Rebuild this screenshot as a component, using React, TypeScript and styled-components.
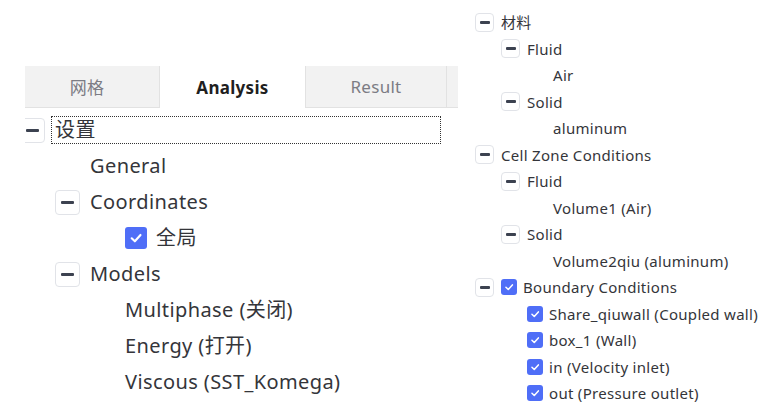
import React from "react";
import styled, { createGlobalStyle, css } from "styled-components";

const GlobalStyle = createGlobalStyle`
	html, body {
		margin: 0;
		padding: 0;
		background: #ffffff;
	}
	body {
		font-family: "Noto Sans", "Noto Sans CJK SC", sans-serif;
		color: #34353a;
	}
`;

type Size = "lg" | "sm";

interface TreeNode {
	label: string;
	children?: TreeNode[];
	checked?: boolean;
	focused?: boolean;
}

const metrics = {
	lg: { row: 36, indent: 35, box: 25, gap: 10, check: 22, checkGap: 9, font: 20, track: 0.4 },
	sm: { row: 26.5, indent: 26, box: 19, gap: 7, check: 16, checkGap: 6, font: 15, track: 0.3 },
};

const Page = styled.div`
	display: flex;
	align-items: flex-start;
	width: 765px;
	height: 412px;
	overflow: hidden;
`;

const LeftPane = styled.div`
	margin: 66px 0 0 25px;
	width: 433px;
	overflow: hidden;
`;

const TabBar = styled.div`
	display: flex;
	height: 42px;
	margin-left: -10px;
	margin-bottom: 4px;
`;

const Tab = styled.div<{ $active?: boolean; $w: number; $edge?: boolean }>`
	flex: 0 0 ${(p) => p.$w}px;
	display: flex;
	align-items: center;
	justify-content: center;
	box-sizing: border-box;
	font-size: 17px;
	letter-spacing: 0.3px;
	${(p) =>
		p.$active
			? css`
					background: #ffffff;
					color: #1f1f1f;
					font-weight: 700;
			  `
			: css`
					background: #f2f2f2;
					color: #7c7c84;
					border-right: 1px solid #e2e2e2;
					border-bottom: 1px solid #e2e2e2;
			  `}
	${(p) => p.$edge && "border-left: 1px solid #e2e2e2;"}
`;

const RightPane = styled.div`
	margin-left: 17px;
	padding-top: 9px;
`;

const Row = styled.div<{ $size: Size; $level: number }>`
	display: flex;
	align-items: center;
	height: ${(p) => metrics[p.$size].row}px;
	padding-left: ${(p) => metrics[p.$size].indent * p.$level}px;
	font-size: ${(p) => metrics[p.$size].font}px;
	letter-spacing: ${(p) => metrics[p.$size].track}px;
	white-space: nowrap;
`;

const Slot = styled.div<{ $size: Size }>`
	flex: 0 0 ${(p) => metrics[p.$size].box + metrics[p.$size].gap}px;
	display: flex;
	align-items: center;
`;

const Toggle = styled.div<{ $size: Size }>`
	width: ${(p) => metrics[p.$size].box}px;
	height: ${(p) => metrics[p.$size].box}px;
	box-sizing: border-box;
	border: 1.5px solid #e1e3e8;
	border-radius: 4px;
	background: #ffffff;
	display: flex;
	align-items: center;
	justify-content: center;
	&::after {
		content: "";
		width: ${(p) => (p.$size === "lg" ? 13 : 10)}px;
		height: 3px;
		border-radius: 1px;
		background: #3c4250;
	}
`;

const Check = styled.div<{ $size: Size }>`
	flex: 0 0 ${(p) => metrics[p.$size].check}px;
	height: ${(p) => metrics[p.$size].check}px;
	margin-right: ${(p) => metrics[p.$size].checkGap}px;
	border-radius: 3px;
	background: #4f6ef7;
	display: flex;
	align-items: center;
	justify-content: center;
	svg {
		width: 64%;
		height: 64%;
	}
`;

const Label = styled.span<{ $focused?: boolean }>`
	line-height: 1.2;
	${(p) =>
		p.$focused &&
		css`
			flex: 1;
			margin-left: -4px;
			margin-right: 17px;
			padding: 1px 3px;
			border: 1px dotted #333;
		`}
`;

const CheckMark = () => (
	<svg viewBox="0 0 12 12" fill="none">
		<path d="M2.3 6.2 L5 8.8 L9.8 3.4" stroke="#fff" strokeWidth="1.8" strokeLinecap="round" strokeLinejoin="round" />
	</svg>
);

const TreeRows = ({ nodes, level, size }: { nodes: TreeNode[]; level: number; size: Size }) => (
	<>
		{nodes.map((n, i) => (
			<React.Fragment key={i}>
				<Row $size={size} $level={level}>
					<Slot $size={size}>{n.children && <Toggle $size={size} />}</Slot>
					{n.checked && (
						<Check $size={size}>
							<CheckMark />
						</Check>
					)}
					<Label $focused={n.focused}>{n.label}</Label>
				</Row>
				{n.children && <TreeRows nodes={n.children} level={level + 1} size={size} />}
			</React.Fragment>
		))}
	</>
);

const setup: TreeNode[] = [
	{
		label: "设置",
		focused: true,
		children: [
			{ label: "General" },
			{ label: "Coordinates", children: [{ label: "全局", checked: true }] },
			{
				label: "Models",
				children: [
					{ label: "Multiphase (关闭)" },
					{ label: "Energy (打开)" },
					{ label: "Viscous (SST_Komega)" },
				],
			},
		],
	},
];

const caseTree: TreeNode[] = [
	{
		label: "材料",
		children: [
			{ label: "Fluid", children: [{ label: "Air" }] },
			{ label: "Solid", children: [{ label: "aluminum" }] },
		],
	},
	{
		label: "Cell Zone Conditions",
		children: [
			{ label: "Fluid", children: [{ label: "Volume1 (Air)" }] },
			{ label: "Solid", children: [{ label: "Volume2qiu (aluminum)" }] },
		],
	},
	{
		label: "Boundary Conditions",
		checked: true,
		children: [
			{ label: "Share_qiuwall (Coupled wall)", checked: true },
			{ label: "box_1 (Wall)", checked: true },
			{ label: "in (Velocity inlet)", checked: true },
			{ label: "out (Pressure outlet)", checked: true },
		],
	},
];

const LeftTree = styled.div`
	margin-left: -5px;
`;

export default function App() {
	return (
		<>
			<GlobalStyle />
			<Page>
				<LeftPane>
					<TabBar>
						<Tab $w={145}>网格</Tab>
						<Tab $w={145} $active>
							Analysis
						</Tab>
						<Tab $w={142} $edge>
							Result
						</Tab>
						<Tab $w={40} />
					</TabBar>
					<LeftTree>
						<TreeRows nodes={setup} level={0} size="lg" />
					</LeftTree>
				</LeftPane>
				<RightPane>
					<TreeRows nodes={caseTree} level={0} size="sm" />
				</RightPane>
			</Page>
		</>
	);
}
